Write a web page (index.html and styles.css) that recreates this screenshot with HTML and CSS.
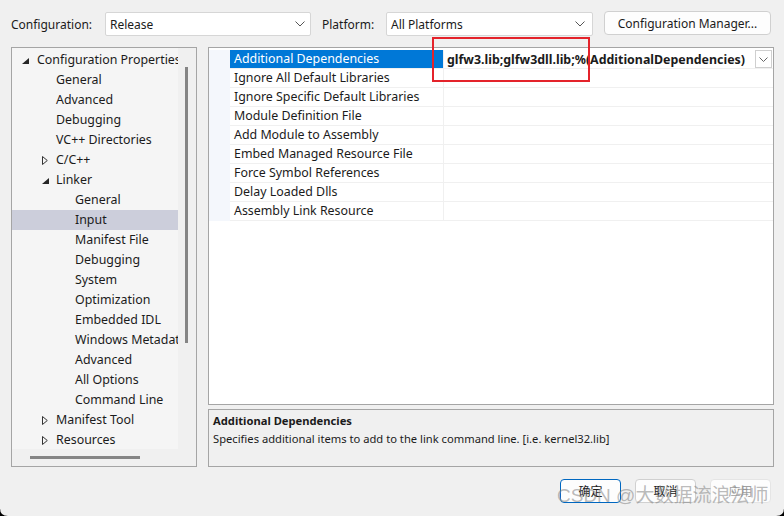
FILE: index.html
```html
<!DOCTYPE html>
<html>
<head>
<meta charset="utf-8">
<link rel="stylesheet" href="styles.css">
</head>
<body>
<div class="window">
  <div class="topbar">
    <span class="lbl lbl-config">Configuration:</span>
    <div class="combo combo-config"><span>Release</span><svg class="chev" width="10" height="6" viewBox="0 0 10 6"><path d="M0.5 0.5 L5 5 L9.5 0.5" fill="none" stroke="#555" stroke-width="1"/></svg></div>
    <span class="lbl lbl-platform">Platform:</span>
    <div class="combo combo-platform"><span>All Platforms</span><svg class="chev" width="10" height="6" viewBox="0 0 10 6"><path d="M0.5 0.5 L5 5 L9.5 0.5" fill="none" stroke="#555" stroke-width="1"/></svg></div>
    <button class="btn btn-manager">Configuration Manager...</button>
  </div>

  <div class="main">
    <div class="tree">
      <div class="tree-content">
        <div class="node l0"><svg class="exp" width="7" height="6" viewBox="0 0 7 6"><path d="M7 0 L7 6 L0 6 Z" fill="#262626"/></svg>Configuration Properties</div>
        <div class="node l1">General</div>
        <div class="node l1">Advanced</div>
        <div class="node l1">Debugging</div>
        <div class="node l1">VC++ Directories</div>
        <div class="node l1"><svg class="exp closed" width="6" height="9" viewBox="0 0 6 9"><path d="M0.5 0.5 L5.3 4.5 L0.5 8.5 Z" fill="none" stroke="#333" stroke-width="1"/></svg>C/C++</div>
        <div class="node l1"><svg class="exp" width="7" height="6" viewBox="0 0 7 6"><path d="M7 0 L7 6 L0 6 Z" fill="#262626"/></svg>Linker</div>
        <div class="node l2">General</div>
        <div class="node l2 sel">Input</div>
        <div class="node l2">Manifest File</div>
        <div class="node l2">Debugging</div>
        <div class="node l2">System</div>
        <div class="node l2">Optimization</div>
        <div class="node l2">Embedded IDL</div>
        <div class="node l2">Windows Metadata</div>
        <div class="node l2">Advanced</div>
        <div class="node l2">All Options</div>
        <div class="node l2">Command Line</div>
        <div class="node l1"><svg class="exp closed" width="6" height="9" viewBox="0 0 6 9"><path d="M0.5 0.5 L5.3 4.5 L0.5 8.5 Z" fill="none" stroke="#333" stroke-width="1"/></svg>Manifest Tool</div>
        <div class="node l1"><svg class="exp closed" width="6" height="9" viewBox="0 0 6 9"><path d="M0.5 0.5 L5.3 4.5 L0.5 8.5 Z" fill="none" stroke="#333" stroke-width="1"/></svg>Resources</div>
      </div>
      <div class="vscroll"><div class="vthumb"></div></div>
      <div class="hscroll"><div class="hthumb"></div></div>
      <div class="corner"></div>
    </div>

    <div class="right">
      <div class="grid-panel">
        <div class="pgrid">
          <div class="margin"></div>
          <div class="rows">
            <div class="row selrow"><div class="name">Additional Dependencies</div><div class="value"><span class="val-text">glfw3.lib;glfw3dll.lib;%(AdditionalDependencies)</span><span class="dd"><svg width="9" height="5" viewBox="0 0 9 5"><path d="M0.5 0.5 L4.5 4.5 L8.5 0.5" fill="none" stroke="#666" stroke-width="1"/></svg></span></div></div>
            <div class="row"><div class="name">Ignore All Default Libraries</div><div class="value"></div></div>
            <div class="row"><div class="name">Ignore Specific Default Libraries</div><div class="value"></div></div>
            <div class="row"><div class="name">Module Definition File</div><div class="value"></div></div>
            <div class="row"><div class="name">Add Module to Assembly</div><div class="value"></div></div>
            <div class="row"><div class="name">Embed Managed Resource File</div><div class="value"></div></div>
            <div class="row"><div class="name">Force Symbol References</div><div class="value"></div></div>
            <div class="row"><div class="name">Delay Loaded Dlls</div><div class="value"></div></div>
            <div class="row"><div class="name">Assembly Link Resource</div><div class="value"></div></div>
          </div>
        </div>
        <div class="redbox"></div>
      </div>
      <div class="desc">
        <div class="desc-title">Additional Dependencies</div>
        <div class="desc-text">Specifies additional items to add to the link command line. [i.e. kernel32.lib]</div>
      </div>
    </div>
  </div>

  <div class="buttons">
    <button class="btn dbtn primary">确定</button>
    <button class="btn dbtn">取消</button>
    <button class="btn dbtn disabled">应用</button>
  </div>
  <div class="watermark">CSDN @大数据流浪法师</div>
  <div class="wc wc-left"></div>
  <div class="wc wc-right"></div>
</div>
</body>
</html>
```

FILE: styles.css
```css
* { box-sizing: border-box; }
html, body { margin: 0; padding: 0; }
body {
  width: 784px;
  height: 516px;
  overflow: hidden;
  background: #f0f0f0;
  font-family: "Noto Sans", "Noto Sans CJK SC", sans-serif;
  font-size: 12.4px;
  color: #1b1b1b;
}
.window {
  position: relative;
  width: 784px;
  height: 516px;
  padding-top: 12px;
}
.topbar {
  display: flex;
  align-items: center;
  height: 24px;
  padding-left: 11px;
  font-size: 12px;
}
.lbl { white-space: nowrap; }
.lbl-config { width: 94px; }
.lbl-platform { width: 64px; margin-left: 11px; }
.combo {
  height: 24px;
  background: #fff;
  border: 1px solid #d6d6d6;
  border-radius: 2px;
  display: flex;
  align-items: center;
  justify-content: space-between;
  padding: 0 5px 0 4px;
}
.combo-config { width: 206px; }
.combo-platform { width: 207px; padding-right: 7px; }
.btn {
  font-family: inherit;
  font-size: 12px;
  color: #1b1b1b;
  background: #fdfdfd;
  border: 1px solid #d0d0d0;
  border-radius: 4px;
  padding: 0;
}
.btn-manager {
  width: 167px;
  height: 24px;
  margin-left: 11px;
  margin-top: -2px;
}

.main {
  display: flex;
  margin-top: 11px;
  padding-left: 11px;
  gap: 11px;
  height: 420px;
}
.tree {
  width: 186px;
  height: 420px;
  border: 1px solid #a5a5a5;
  display: grid;
  grid-template-columns: 166px 1fr;
  grid-template-rows: 401px 1fr;
  background: #f0f0f0;
}
.tree-content {
  background: #f5f5f5;
  padding-top: 2px;
  overflow: hidden;
}
.node {
  height: 20px;
  line-height: 20px;
  white-space: nowrap;
  position: relative;
  overflow: hidden;
}
.node.l0 { padding-left: 25px; }
.node.l1 { padding-left: 44px; }
.node.l2 { padding-left: 63px; }
.node.sel { background: #cccedb; }
.exp {
  position: absolute;
  top: 8px;
  display: block;
}
.l0 .exp { left: 10px; }
.l1 .exp { left: 30px; }
.l1 .exp.closed { left: 30px; top: 6px; }
.vscroll { position: relative; }
.vthumb {
  position: absolute;
  left: 7px;
  top: 19px;
  width: 3px;
  height: 276px;
  background: #858585;
}
.hscroll { position: relative; }
.hthumb {
  position: absolute;
  left: 18px;
  top: 7px;
  width: 110px;
  height: 3px;
  background: #858585;
}

.right {
  width: 566px;
  display: flex;
  flex-direction: column;
  gap: 4px;
}
.grid-panel {
  position: relative;
  height: 358px;
  border: 1px solid #a5a5a5;
  background: #fff;
}
.pgrid {
  display: flex;
  padding-top: 2px;
}
.margin {
  width: 21px;
  height: 171px;
  background: #f4f7fc;
}
.rows { flex: 1; }
.row {
  display: flex;
  height: 19px;
  border-bottom: 1px solid #f0f0f0;
}
.name {
  width: 214px;
  padding-left: 4px;
  line-height: 18px;
  white-space: nowrap;
  border-right: 1px solid #f0f0f0;
}
.value {
  flex: 1;
  display: flex;
  align-items: center;
  justify-content: space-between;
  padding-left: 3px;
  padding-right: 1px;
}
.selrow .name { background: #0078d7; color: #fff; }
.val-text { font-weight: bold; white-space: nowrap; }
.dd {
  width: 17px;
  height: 18px;
  border: 1px solid #cfcfcf;
  display: flex;
  align-items: center;
  justify-content: center;
  background: #fff;
}
.redbox {
  position: absolute;
  left: 223px;
  top: -11px;
  width: 158px;
  height: 45px;
  border: 2px solid #e4232b;
}
.desc {
  height: 58px;
  border: 1px solid #a5a5a5;
  background: #f0f0f0;
  padding: 1px 4px;
  font-size: 11.2px;
}
.desc-title { font-weight: bold; line-height: 19px; }
.desc-text { line-height: 18px; }

.buttons {
  display: flex;
  justify-content: flex-end;
  gap: 14px;
  padding-right: 13px;
  margin-top: 12px;
}
.dbtn {
  width: 61px;
  height: 24px;
}
.dbtn.primary { border: 1px solid #0067c0; }
.dbtn.disabled { color: #a0a0a0; border-color: #e5e5e5; }
.watermark {
  position: absolute;
  left: 557px;
  top: 483px;
  font-size: 19px;
  line-height: 26px;
  color: rgba(130, 130, 130, 0.55);
  white-space: nowrap;
  font-family: "Liberation Sans", "Noto Sans CJK SC", sans-serif;
}
.wc {
  position: absolute;
  bottom: 0;
  width: 8px;
  height: 8px;
  background: #000;
}
.wc-left { left: 0; clip-path: path("M0 0 Q0 8 8 8 L0 8 Z"); }
.wc-right { right: 0; clip-path: path("M8 0 Q8 8 0 8 L8 8 Z"); }
```
